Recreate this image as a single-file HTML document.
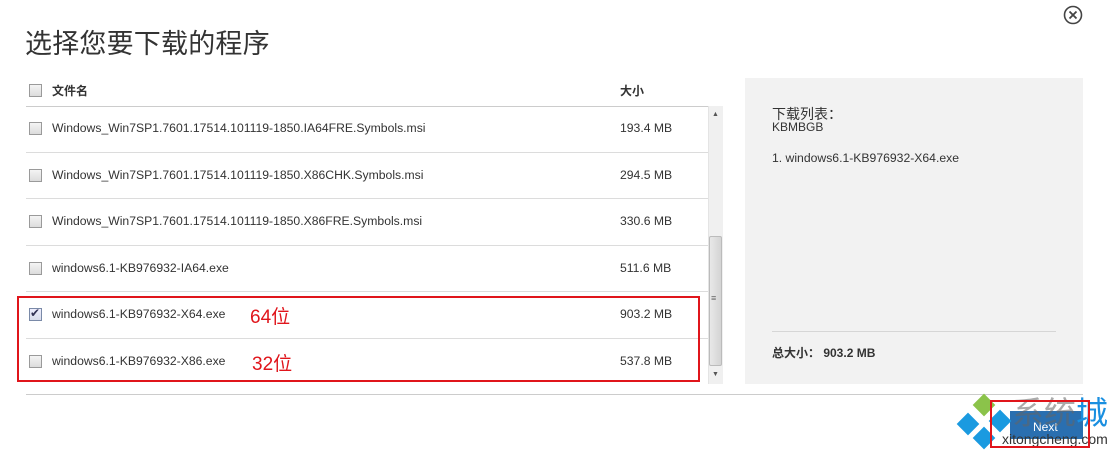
<!DOCTYPE html>
<html><head><meta charset="utf-8"><style>
*{margin:0;padding:0;box-sizing:border-box}
body{width:1111px;height:452px;background:#fff;position:relative;overflow:hidden;font-family:"Liberation Sans","Noto Sans CJK SC",sans-serif;color:#333}
.a{position:absolute;white-space:nowrap}
.cb{position:absolute;width:13px;height:13px;border:1px solid #9a9a9a;background:linear-gradient(#f4f4f4,#dcdcdc)}
.hl{position:absolute;height:1px;background:#dcdcdc}
.fn{font-size:12.2px;color:#333}
.d{position:absolute;width:16px;height:16px;transform:rotate(45deg);background:#1a9ae0}
</style></head><body>
<div class="a" style="left:25px;top:22px;font-size:27px;color:#333;letter-spacing:0.2px">选择您要下载的程序</div>
<svg class="a" style="left:1062px;top:4px" width="22" height="22" viewBox="0 0 22 22"><circle cx="11" cy="11" r="8.5" fill="none" stroke="#444" stroke-width="1.6"/><path d="M7.5 7.5L14.5 14.5M14.5 7.5L7.5 14.5" stroke="#444" stroke-width="1.8"/></svg>

<div class="cb" style="left:29px;top:84px"></div>
<div class="a" style="left:52px;top:82px;font-size:12px;font-weight:bold">文件名</div>
<div class="a" style="left:620px;top:82px;font-size:12px;font-weight:bold">大小</div>
<div class="hl" style="left:26px;top:106px;width:682px;background:#ccc"></div>

<div class="cb" style="left:29px;top:122px"></div><div class="a fn" style="left:52px;top:121px">Windows_Win7SP1.7601.17514.101119-1850.IA64FRE.Symbols.msi</div><div class="a fn" style="left:620px;top:121px">193.4 MB</div>
<div class="hl" style="left:26px;top:152px;width:682px"></div>
<div class="cb" style="left:29px;top:169px"></div><div class="a fn" style="left:52px;top:168px">Windows_Win7SP1.7601.17514.101119-1850.X86CHK.Symbols.msi</div><div class="a fn" style="left:620px;top:168px">294.5 MB</div>
<div class="hl" style="left:26px;top:198px;width:682px"></div>
<div class="cb" style="left:29px;top:215px"></div><div class="a fn" style="left:52px;top:214px">Windows_Win7SP1.7601.17514.101119-1850.X86FRE.Symbols.msi</div><div class="a fn" style="left:620px;top:214px">330.6 MB</div>
<div class="hl" style="left:26px;top:245px;width:682px"></div>
<div class="cb" style="left:29px;top:262px"></div><div class="a fn" style="left:52px;top:261px">windows6.1-KB976932-IA64.exe</div><div class="a fn" style="left:620px;top:261px">511.6 MB</div>
<div class="hl" style="left:26px;top:291px;width:682px"></div>
<div class="cb" style="left:29px;top:308px;background:linear-gradient(#eef,#d8dcea);border-color:#7a8aa8"></div>
<div class="a" style="left:30px;top:306px;font-size:12px;color:#335">✔</div>
<div class="a fn" style="left:52px;top:307px">windows6.1-KB976932-X64.exe</div><div class="a fn" style="left:620px;top:307px">903.2 MB</div>
<div class="a" style="left:250px;top:302px;font-size:19px;color:#e0151b">64位</div>
<div class="hl" style="left:26px;top:338px;width:682px"></div>
<div class="cb" style="left:29px;top:355px"></div><div class="a fn" style="left:52px;top:354px">windows6.1-KB976932-X86.exe</div><div class="a fn" style="left:620px;top:354px">537.8 MB</div>
<div class="a" style="left:252px;top:349px;font-size:19px;color:#e0151b">32位</div>
<div class="a" style="left:17px;top:296px;width:683px;height:86px;border:2px solid #e0151b"></div>

<div class="a" style="left:708px;top:106px;width:15px;height:278px;background:#f0f0f0;border-left:1px solid #e4e4e4"></div>
<div class="a" style="left:712px;top:111px;font-size:7px;color:#555">▲</div>
<div class="a" style="left:709px;top:236px;width:13px;height:130px;background:linear-gradient(90deg,#e8e8e8,#d4d4d4);border:1px solid #bbb;border-radius:2px"></div>
<div class="a" style="left:711px;top:293px;font-size:9px;color:#666">≡</div>
<div class="a" style="left:712px;top:371px;font-size:7px;color:#555">▼</div>
<div class="hl" style="left:26px;top:394px;width:1057px;background:#ccc"></div>

<div class="a" style="left:745px;top:78px;width:338px;height:306px;background:#f2f2f2"></div>
<div class="a" style="left:772px;top:104px;font-size:14px;color:#333">下载列表：</div>
<div class="a" style="left:772px;top:120px;font-size:12px">KBMBGB</div>
<div class="a" style="left:772px;top:151px;font-size:12.2px">1. windows6.1-KB976932-X64.exe</div>
<div class="hl" style="left:772px;top:331px;width:284px;background:#d6d6d6"></div>
<div class="a" style="left:772px;top:344px;font-size:12px;font-weight:bold">总大小： 903.2 MB</div>

<div class="a" style="left:1010px;top:411px;width:73px;height:28px;background:#2a6fb0"></div>
<div class="a" style="left:1033px;top:420px;font-size:12px;color:#fff">Next</div>
<div class="a" style="left:1012px;top:394px;font-size:32px;line-height:38px;color:rgba(100,100,100,0.55);letter-spacing:0px">系统<span style="color:#1a8fe0">城</span></div>
<div class="a" style="left:1002px;top:431px;font-size:14px;color:#333">xitongcheng.com</div>
<div class="d" style="left:976px;top:397px;background:#8bc34a"></div>
<div class="d" style="left:960px;top:416px"></div>
<div class="d" style="left:992px;top:413px"></div>
<div class="d" style="left:976px;top:430px"></div>
<div class="a" style="left:990px;top:400px;width:100px;height:48px;border:2px solid #e0151b"></div>
</body></html>
